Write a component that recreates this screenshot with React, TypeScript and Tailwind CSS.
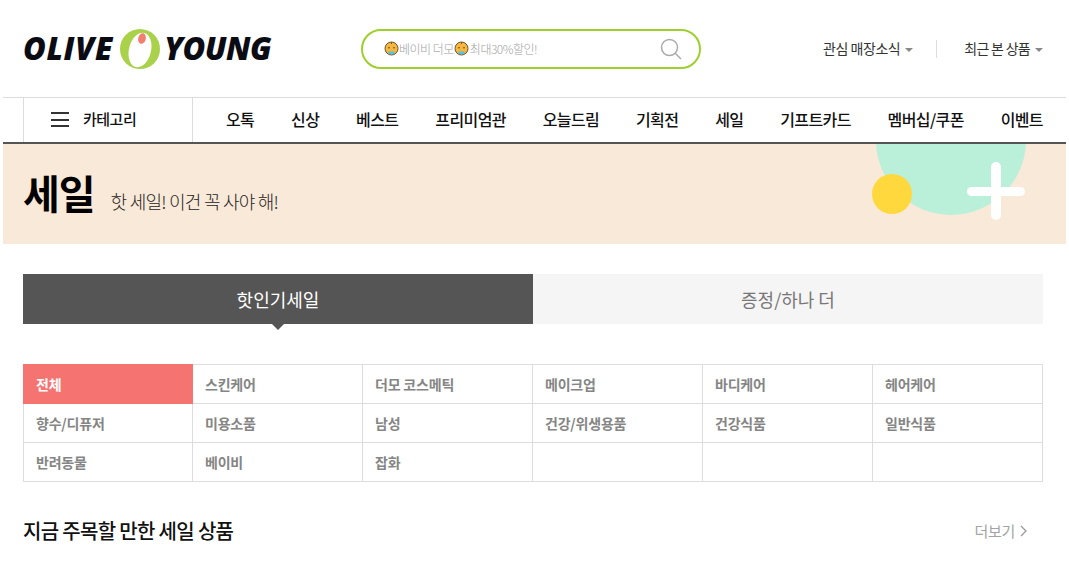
import React from "react";

const Baby = () => (
  <svg width="15" height="15" viewBox="0 0 15 15" className="shrink-0">
    <circle cx="7.5" cy="7.5" r="6.5" fill="#f8b63a" stroke="#6a5530" strokeWidth="1" />
    <circle cx="5" cy="6.8" r="0.7" fill="#333" />
    <circle cx="10" cy="6.8" r="0.7" fill="#333" />
    <path d="M4.2 10.4h6.6l-1 2.8h-4.6z" fill="#4fc3e8" />
    <path d="M7.5 1.2v1.8" stroke="#6a5530" strokeWidth="1" />
  </svg>
);

const Caret = () => <span className="ml-[5px] mt-[2px] h-0 w-0 border-x-[4px] border-t-[4px] border-x-transparent border-t-[#888]" />;

const navItems = ["오톡", "신상", "베스트", "프리미엄관", "오늘드림", "기획전", "세일", "기프트카드", "멤버십/쿠폰", "이벤트"];
const cats = ["전체", "스킨케어", "더모 코스메틱", "메이크업", "바디케어", "헤어케어", "향수/디퓨저", "미용소품", "남성", "건강/위생용품", "건강식품", "일반식품", "반려동물", "베이비", "잡화", "", "", ""];

export default function App() {
  return (
    <div className="w-[1069px] h-[574px] overflow-hidden bg-white pl-[3px] font-['Noto_Sans_CJK_KR','Noto_Sans',sans-serif]">
      <div className="w-[1063px]">
        <header className="flex h-[97px] items-center pl-[20px]">
          <div className="flex w-[248px] items-center font-['Open_Sans',sans-serif] text-[31px] font-extrabold italic leading-none text-[#0b0b14]">
            <span className="tracking-[0.7px]">OLIVE</span>
            <svg width="42" height="42" viewBox="0 0 42 42" className="ml-[6px] mr-[3px] shrink-0">
              <circle cx="21" cy="21" r="20" fill="#a9d14a" />
              <ellipse cx="21" cy="22" rx="11" ry="17.5" transform="rotate(14 21 22)" fill="#fff" />
              <ellipse cx="23" cy="10.5" rx="3.8" ry="5.4" transform="rotate(14 23 10.5)" fill="#f27f6e" />
            </svg>
            <span className="tracking-[-0.5px]">YOUNG</span>
          </div>
          <div className="ml-[90px] flex h-[40px] w-[340px] items-center rounded-full border-[2px] border-[#9ecf2e] pl-[21px] pr-[17px] text-[12px] tracking-[-0.5px] font-light text-[#a3a3a3]">
            <Baby />
            <span>베이비 더모</span>
            <Baby />
            <span className="ml-[1px]">최대30%할인!</span>
            <svg width="22" height="22" viewBox="0 0 22 22" fill="none" stroke="#aaa" strokeWidth="1.5" className="ml-auto">
              <circle cx="9.5" cy="9.5" r="8" />
              <path d="M15.2 15.2l5.8 5.8" />
            </svg>
          </div>
          <div className="ml-[122px] flex items-center text-[14px] tracking-[-0.45px] text-[#333]">
            <span>관심 매장소식</span>
            <Caret />
            <span className="ml-[23px] mr-[27px] h-[18px] w-px bg-[#ddd]" />
            <span className="tracking-[-0.7px]">최근 본 상품</span>
            <Caret />
          </div>
        </header>

        <nav className="box-border flex h-[47px] border-t border-b-[2px] border-[#ddd] border-b-[#555]">
          <div className="ml-[20px] flex w-[170px] items-center border-x border-[#ddd] pb-[1px] pl-[27px]">
            <span className="flex w-[18px] flex-col gap-[4.5px]">
              <span className="h-[2px] bg-[#333]" />
              <span className="h-[2px] bg-[#333]" />
              <span className="h-[2px] bg-[#333]" />
            </span>
            <span className="ml-[14px] text-[15px] font-medium tracking-[-0.5px] text-[#111]">카테고리</span>
          </div>
          <ul className="flex flex-1 items-center justify-between pb-[3px] pl-[33px] pr-[23px] text-[16px] font-medium tracking-[-0.6px] text-[#111]">
            {navItems.map((n) => (
              <li key={n}>{n}</li>
            ))}
          </ul>
        </nav>

        <section className="relative flex h-[100px] overflow-hidden bg-[#f9e9d8] pl-[20px] pt-[20px]">
          <h1 className="text-[40px] font-bold leading-[56px] tracking-[-1px] text-black">세일</h1>
          <p className="ml-[16px] mt-[24px] text-[18px] font-light leading-[26px] tracking-[-0.75px] text-[#222]">핫 세일! 이건 꼭 사야 해!</p>
          <span className="absolute left-[873px] top-[-79px] h-[150px] w-[150px] rounded-full bg-[#baf0da]" />
          <span className="absolute left-[869px] top-[30px] h-[40px] w-[40px] rounded-full bg-[#ffd83d]" />
          <span className="absolute left-[964px] top-[43px] h-[9px] w-[58px] rounded-full bg-white" />
          <span className="absolute left-[988px] top-[18px] h-[58px] w-[10px] rounded-full bg-white" />
        </section>

        <div className="ml-[20px] w-[1020px]">
          <div className="mt-[30px] flex h-[50px] text-[18px]">
            <div className="relative flex w-[510px] items-center justify-center bg-[#555] text-white">
              핫인기세일
              <span className="absolute left-[249px] top-full h-0 w-0 border-x-[6px] border-t-[6px] border-x-transparent border-t-[#555]" />
            </div>
            <div className="flex w-[510px] items-center justify-center bg-[#f5f5f5] text-[#777]">증정/하나 더</div>
          </div>

          <div className="mt-[40px] grid w-[1020px] grid-cols-[169px_repeat(5,170px)] border-l border-t border-[#ddd]">
            {cats.map((c, i) => (
              <div
                key={i}
                className={
                  i === 0
                    ? "-ml-px -mt-px flex h-[40px] w-[170px] items-center bg-[#f57472] pl-[13px] text-[14px] font-bold tracking-[-0.2px] text-white"
                    : "flex h-[39px] items-center border-b border-r border-[#ddd] pl-[12px] text-[14px] font-bold tracking-[-0.2px] text-[#858585]"
                }
              >
                {c}
              </div>
            ))}
          </div>

          <div className="mt-[34px] flex items-center justify-between">
            <h2 className="text-[20px] font-medium leading-[30px] tracking-[-0.67px] text-[#111]">지금 주목할 만한 세일 상품</h2>
            <span className="mr-[15px] flex items-center text-[15px] tracking-[-0.3px] text-[#a3a3a3]">
              더보기
              <svg width="8" height="12" viewBox="0 0 8 12" fill="none" stroke="#999" strokeWidth="1.3" className="ml-[5px]">
                <path d="M1 1l5 5-5 5" />
              </svg>
            </span>
          </div>
        </div>
      </div>
    </div>
  );
}
